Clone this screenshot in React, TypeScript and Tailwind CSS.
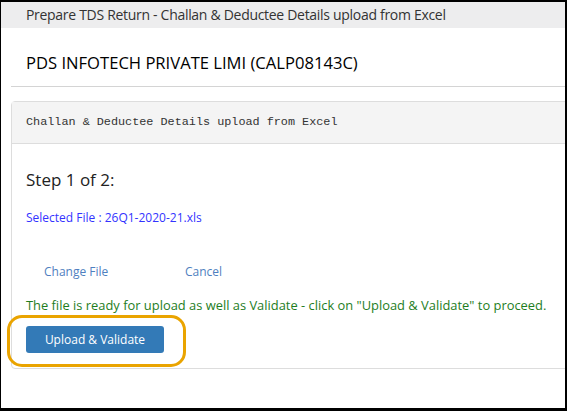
export default function App() {
  return (
    <div className="relative h-[411px] w-[567px] overflow-hidden border-t-2 border-l border-r-2 border-b-[3px] border-black bg-white font-['Open_Sans',sans-serif] text-[#333]">
      <div className="h-[26px] bg-[#ededee] pl-[25px] text-[14px] leading-[26px] tracking-[-0.3px] text-[#333]">
        Prepare TDS Return - Challan &amp; Deductee Details upload from Excel
      </div>

      <div className="mt-[23px] pl-[25px] text-[16.6px] leading-[24px] text-black">
        PDS INFOTECH PRIVATE LIMI (CALP08143C)
      </div>
      <div className="ml-[10px] mt-[11px] border-t border-[#d4d4d4]" />

      <div className="ml-[10px] mr-[-10px] mt-[14px] rounded-[4px] border border-[#dddddd]">
        <div className="flex h-[42px] items-center border-b border-[#dddddd] bg-[#f4f4f4] pl-[14px] font-['Liberation_Mono',monospace] text-[11.8px] text-[#333]">
          Challan &amp; Deductee Details upload from Excel
        </div>
        <div className="pb-[15px] pl-[14px] pt-[24px]">
          <div className="text-[17px] leading-[24px] text-[#222]">Step 1 of 2:</div>
          <div className="mt-[17px] text-[12px] leading-[17px] text-[#3333ff]">
            Selected File : 26Q1-2020-21.xls
          </div>
          <div className="mt-[37px] flex text-[12px] leading-[17px] text-[#4f7fc0]">
            <span className="ml-[18px] w-[141px]">Change File</span>
            <span>Cancel</span>
          </div>
          <div className="mt-[17px] whitespace-nowrap text-[12.9px] leading-[17px] text-[#1e7d1e]">
            The file is ready for upload as well as Validate - click on "Upload &amp; Validate" to proceed.
          </div>
          <button className="mt-[12px] h-[27px] w-[138px] rounded-[3px] bg-[#337ab7] text-[12px] text-white">
            Upload &amp; Validate
          </button>
        </div>
      </div>

      <div className="pointer-events-none absolute left-[6px] top-[313px] h-[52px] w-[179px] rounded-[15px] border-[3px] border-[#eaa400]" />
    </div>
  )
}
